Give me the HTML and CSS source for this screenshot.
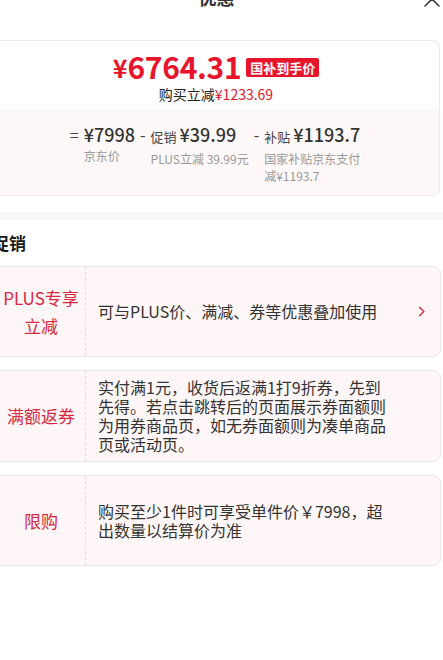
FILE: index.html
```html
<!DOCTYPE html>
<html lang="zh-CN">
<head>
    <meta charset="UTF-8">
    <meta name="viewport" content="width=device-width, initial-scale=1.0">
    <title>优惠</title>
<link rel="stylesheet" href="styles.css">
</head>
<body>
    <div class="sheet">
        <div class="sheet-header">
            <span class="sheet-title">优惠</span>
            <svg class="sheet-close" width="16" height="16" viewBox="0 0 16 16">
                <path d="M1 1 L15 15 M15 1 L1 15" stroke="#333" stroke-width="1.5" fill="none" stroke-linecap="round"/>
            </svg>
        </div>

        <!-- 到手价卡片 -->
        <div class="price-card">
            <div class="price-top">
                <div class="price-line">
                    <span class="price-yen">¥</span><span class="price-num">6764.31</span>
                    <span class="price-tag">国补到手价</span>
                </div>
                <div class="price-save">购买立减<span class="red">¥1233.69</span></div>
            </div>
            <div class="price-detail">
                <div class="calc-col">
                    <span class="calc-op">=</span>
                    <div class="calc-body">
                        <div class="calc-value">¥7998</div>
                        <div class="calc-label">京东价</div>
                    </div>
                </div>
                <div class="calc-col">
                    <span class="calc-op">-</span>
                    <div class="calc-body">
                        <div class="calc-value"><span class="calc-name">促销</span>¥39.99</div>
                        <div class="calc-label">PLUS立减 39.99元</div>
                    </div>
                </div>
                <div class="calc-col">
                    <span class="calc-op">-</span>
                    <div class="calc-body">
                        <div class="calc-value"><span class="calc-name">补贴</span>¥1193.7</div>
                        <div class="calc-label narrow">国家补贴京东支付减¥1193.7</div>
                    </div>
                </div>
            </div>
        </div>

        <div class="divider-band"></div>

        <h3 class="section-title">促销</h3>

        <div class="promo-card">
            <div class="promo-label">PLUS专享<br>立减</div>
            <div class="promo-text">可与PLUS价、满减、券等优惠叠加使用</div>
            <svg class="promo-arrow" width="7" height="11" viewBox="0 0 7 11">
                <polyline points="1.2,1 5.8,5.5 1.2,10" stroke="#d8283f" stroke-width="1.4" fill="none"/>
            </svg>
        </div>

        <div class="promo-card">
            <div class="promo-label">满额返券</div>
            <div class="promo-text">实付满1元，收货后返满1打9折券，先到先得。若点击跳转后的页面展示券面额则为用券商品页，如无券面额则为凑单商品页或活动页。</div>
        </div>

        <div class="promo-card">
            <div class="promo-label">限购</div>
            <div class="promo-text">购买至少1件时可享受单件价￥7998，超出数量以结算价为准</div>
        </div>
    </div>
</body>
</html>
```

FILE: styles.css
```css
body {
    margin: 0;
    padding: 0;
    background: #fff;
    font-family: "Noto Sans CJK SC", "Noto Sans", sans-serif;
    color: #333;
    overflow: hidden;
}
.sheet {
    width: 449px;
    margin-left: -8px;
}
.sheet-header {
    height: 44px;
    margin-top: -25px;
    display: flex;
    justify-content: center;
    align-items: center;
    position: relative;
}
.sheet-title {
    font-size: 18px;
    font-weight: bold;
    color: #333;
}
.sheet-close {
    position: absolute;
    right: 1px;
    top: 16px;
}
.price-card {
    margin-top: 21px;
    margin-right: 1px;
    border: 1px solid #f1e6e8;
    border-radius: 8px;
    overflow: hidden;
}
.price-top {
    padding: 7px 0 6px;
    text-align: center;
}
.price-line {
    display: flex;
    justify-content: center;
    align-items: center;
    height: 36px;
    line-height: 36px;
    color: #e8142c;
    font-weight: bold;
}
.price-yen {
    font-size: 25px;
    margin-top: 2px;
}
.price-num {
    font-size: 30px;
    letter-spacing: -0.3px;
}
.price-tag {
    margin-left: 5px;
    background: #e8142c;
    color: #fff;
    font-size: 13px;
    line-height: 19px;
    padding: 0 4px;
    border-radius: 2px;
    margin-top: 3px;
}
.price-save {
    font-size: 14px;
    line-height: 20px;
    color: #222;
}
.red {
    color: #e8142c;
}
.price-detail {
    background: #fef8f8;
    border-top: 1px solid #f8eef0;
    padding: 10px 0 11px;
    display: flex;
    justify-content: center;
    gap: 5px;
}
.calc-col {
    display: flex;
    align-items: flex-start;
}
.calc-op {
    font-size: 16px;
    line-height: 26px;
    color: #444;
    margin-right: 5px;
}
.calc-value {
    font-size: 18px;
    font-weight: 500;
    line-height: 26px;
    color: #333;
}
.calc-name {
    font-size: 13px;
    font-weight: normal;
    color: #444;
    margin-right: 3px;
}
.calc-label {
    font-size: 12px;
    line-height: 17px;
    color: #999;
}
.calc-label.narrow {
    width: 98px;
}
.divider-band {
    height: 8px;
    margin-top: 16px;
    margin-right: -10px;
    background: #f6f7fb;
}
.section-title {
    margin: 11px 0 11px;
    font-size: 17px;
    line-height: 24px;
    font-weight: bold;
    color: #1a1a1a;
}
.promo-card {
    display: flex;
    align-items: center;
    min-height: 89px;
    margin-bottom: 13px;
    background: #fef6f7;
    border: 1px solid #f2e4e7;
    border-radius: 8px;
}
.promo-label {
    align-self: stretch;
    width: 88px;
    padding-left: 4px;
    display: flex;
    align-items: center;
    justify-content: center;
    text-align: center;
    font-size: 17px;
    line-height: 28px;
    color: #d8283f;
    border-right: 1px dashed #e9d6da;
}
.promo-text {
    width: 292px;
    margin-left: 12px;
    padding: 7px 0;
    font-size: 16px;
    line-height: 19px;
    color: #333;
}
.promo-arrow {
    margin-left: 28px;
}
```
